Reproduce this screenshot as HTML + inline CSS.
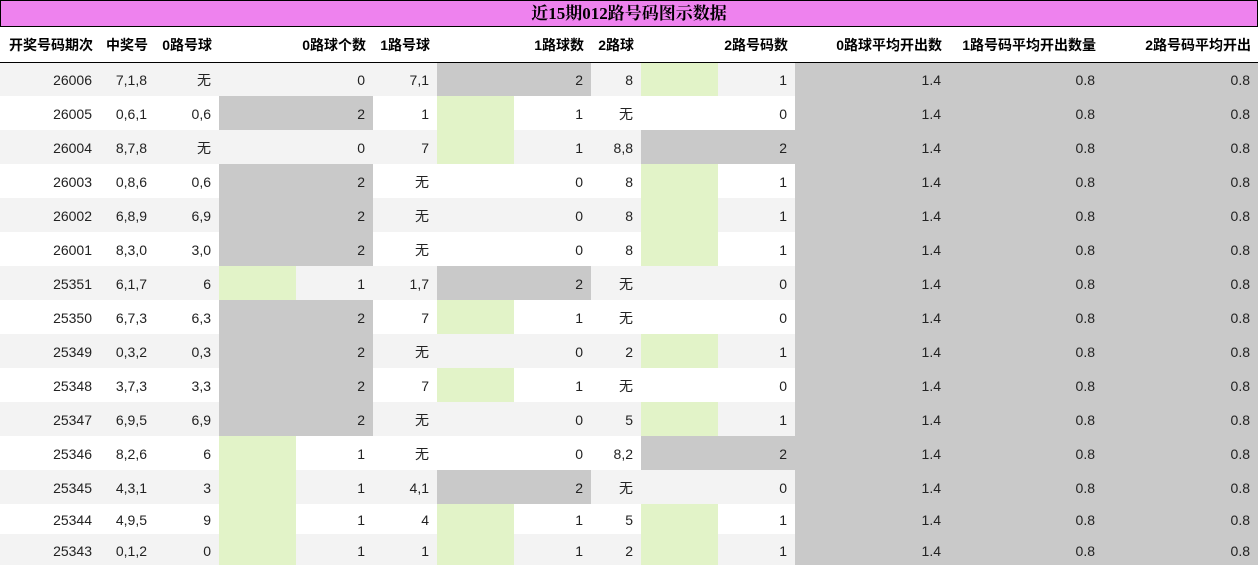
<!DOCTYPE html>
<html><head><meta charset="utf-8"><style>
body{margin:0;background:#fff;font-family:"Liberation Sans","Noto Sans CJK SC",sans-serif;font-size:14px;color:#222}
.t{position:absolute;left:0;top:0;width:1256px;height:25px;border:1px solid #000;background:#ee82ee;text-align:center;font:bold 17px/25px "Liberation Serif","Noto Serif CJK SC",serif;color:#000}
table{position:absolute;left:0;top:27px;border-collapse:collapse;table-layout:fixed;width:1258px}
td,th{padding:0 8px 0 0;text-align:right;white-space:nowrap;overflow:hidden;line-height:16px;box-sizing:border-box}
th{height:35px;border-bottom:1px solid #000;font-weight:bold;color:#000;padding-top:1px;padding-right:7px}
td{height:34px;padding-top:2px}
tr.s td{height:30px}
tr.l td{height:31px}
tr.o{background:#f3f3f3}
.g{background:#c9c9c9}
.h{background:linear-gradient(to right,#e2f3c8 77px,transparent 77px)}
</style></head><body>
<div class="t">近15期012路号码图示数据</div>
<table>
<colgroup><col style="width:100px"><col style="width:55px"><col style="width:64px"><col style="width:154px"><col style="width:64px"><col style="width:154px"><col style="width:50px"><col style="width:154px"><col style="width:154px"><col style="width:154px"><col style="width:155px"></colgroup>
<tr><th>开奖号码期次</th><th>中奖号</th><th>0路号球</th><th>0路球个数</th><th>1路号球</th><th>1路球数</th><th>2路球</th><th>2路号码数</th><th>0路球平均开出数</th><th>1路号码平均开出数量</th><th>2路号码平均开出</th></tr>
<tr class="o"><td>26006</td><td>7,1,8</td><td>无</td><td>0</td><td>7,1</td><td class="g">2</td><td>8</td><td class="h">1</td><td class="g">1.4</td><td class="g">0.8</td><td class="g">0.8</td></tr>
<tr><td>26005</td><td>0,6,1</td><td>0,6</td><td class="g">2</td><td>1</td><td class="h">1</td><td>无</td><td>0</td><td class="g">1.4</td><td class="g">0.8</td><td class="g">0.8</td></tr>
<tr class="o"><td>26004</td><td>8,7,8</td><td>无</td><td>0</td><td>7</td><td class="h">1</td><td>8,8</td><td class="g">2</td><td class="g">1.4</td><td class="g">0.8</td><td class="g">0.8</td></tr>
<tr><td>26003</td><td>0,8,6</td><td>0,6</td><td class="g">2</td><td>无</td><td>0</td><td>8</td><td class="h">1</td><td class="g">1.4</td><td class="g">0.8</td><td class="g">0.8</td></tr>
<tr class="o"><td>26002</td><td>6,8,9</td><td>6,9</td><td class="g">2</td><td>无</td><td>0</td><td>8</td><td class="h">1</td><td class="g">1.4</td><td class="g">0.8</td><td class="g">0.8</td></tr>
<tr><td>26001</td><td>8,3,0</td><td>3,0</td><td class="g">2</td><td>无</td><td>0</td><td>8</td><td class="h">1</td><td class="g">1.4</td><td class="g">0.8</td><td class="g">0.8</td></tr>
<tr class="o"><td>25351</td><td>6,1,7</td><td>6</td><td class="h">1</td><td>1,7</td><td class="g">2</td><td>无</td><td>0</td><td class="g">1.4</td><td class="g">0.8</td><td class="g">0.8</td></tr>
<tr><td>25350</td><td>6,7,3</td><td>6,3</td><td class="g">2</td><td>7</td><td class="h">1</td><td>无</td><td>0</td><td class="g">1.4</td><td class="g">0.8</td><td class="g">0.8</td></tr>
<tr class="o"><td>25349</td><td>0,3,2</td><td>0,3</td><td class="g">2</td><td>无</td><td>0</td><td>2</td><td class="h">1</td><td class="g">1.4</td><td class="g">0.8</td><td class="g">0.8</td></tr>
<tr><td>25348</td><td>3,7,3</td><td>3,3</td><td class="g">2</td><td>7</td><td class="h">1</td><td>无</td><td>0</td><td class="g">1.4</td><td class="g">0.8</td><td class="g">0.8</td></tr>
<tr class="o"><td>25347</td><td>6,9,5</td><td>6,9</td><td class="g">2</td><td>无</td><td>0</td><td>5</td><td class="h">1</td><td class="g">1.4</td><td class="g">0.8</td><td class="g">0.8</td></tr>
<tr><td>25346</td><td>8,2,6</td><td>6</td><td class="h">1</td><td>无</td><td>0</td><td>8,2</td><td class="g">2</td><td class="g">1.4</td><td class="g">0.8</td><td class="g">0.8</td></tr>
<tr class="o"><td>25345</td><td>4,3,1</td><td>3</td><td class="h">1</td><td>4,1</td><td class="g">2</td><td>无</td><td>0</td><td class="g">1.4</td><td class="g">0.8</td><td class="g">0.8</td></tr>
<tr class="s"><td>25344</td><td>4,9,5</td><td>9</td><td class="h">1</td><td>4</td><td class="h">1</td><td>5</td><td class="h">1</td><td class="g">1.4</td><td class="g">0.8</td><td class="g">0.8</td></tr>
<tr class="o l"><td>25343</td><td>0,1,2</td><td>0</td><td class="h">1</td><td>1</td><td class="h">1</td><td>2</td><td class="h">1</td><td class="g">1.4</td><td class="g">0.8</td><td class="g">0.8</td></tr>
</table>
</body></html>
